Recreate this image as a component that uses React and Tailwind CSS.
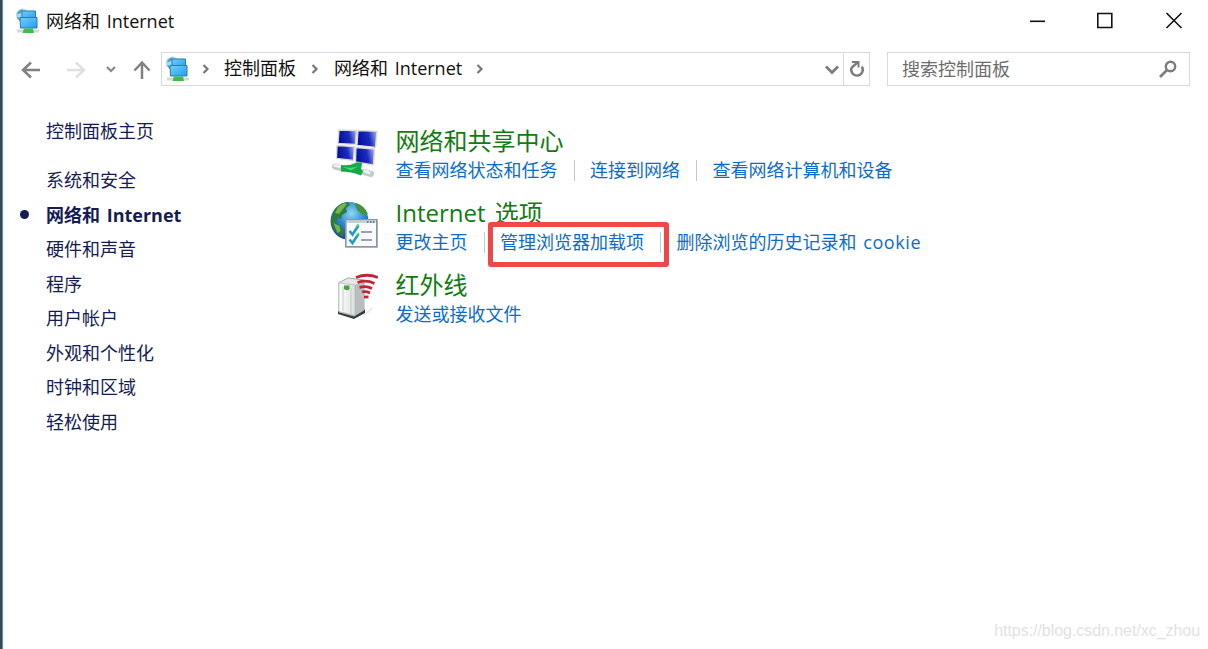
/**
 * App.jsx - 控制面板窗口 (网络和 Internet)
 */
import React from 'react';

const CATEGORIES = [
  '系统和安全',
  '网络和 Internet',
  '硬件和声音',
  '程序',
  '用户帐户',
  '外观和个性化',
  '时钟和区域',
  '轻松使用',
];

const ACTIVE = '网络和 Internet';

const SECTIONS = [
  {
    title: '网络和共享中心',
    Icon: SharingIcon,
    links: ['查看网络状态和任务', '连接到网络', '查看网络计算机和设备'],
  },
  {
    title: 'Internet 选项',
    Icon: InternetOptionsIcon,
    links: ['更改主页', '管理浏览器加载项', '删除浏览的历史记录和 cookie'],
    marked: '管理浏览器加载项',
  },
  {
    title: '红外线',
    Icon: InfraredIcon,
    links: ['发送或接收文件'],
  },
];

function NetworkIcon() {
  return (
    <svg width="25" height="26" viewBox="0 0 25 26" className="shrink-0">
      <defs>
        <linearGradient id="screen" x1="0" y1="0" x2="1" y2="1">
          <stop offset="0" stopColor="#72d0fc" />
          <stop offset="1" stopColor="#229eee" />
        </linearGradient>
      </defs>
      <circle cx="7.500" cy="7" r="6.500" fill="#a8d8ee" />
      <path d="M2 5q3-4 6-3.500l-2 3.500-3 1zM1.500 9l4 1v4z" fill="#4c9fc9" />
      <path d="M7 3h13.500v8h-13.500z" fill="url(#screen)" stroke="#267daf" />
      <path d="M5 9.500h17v10.500H5.500z" fill="url(#screen)" stroke="#267daf" />
      <path d="M2 21.500h22v3H2z" fill="#d7d9d9" />
      <path d="M9 20.500h9l1 4.500H7.500z" fill="#3fbd4a" />
    </svg>
  );
}

function SharingIcon() {
  return (
    <svg width="48" height="52" viewBox="0 0 48 52">
      <defs>
        <linearGradient id="monitor" x1="0" y1="0.2" x2="1" y2="0">
          <stop offset="0" stopColor="#0510a0" />
          <stop offset="0.550" stopColor="#1c2cc0" />
          <stop offset="1" stopColor="#a9bcf2" />
        </linearGradient>
      </defs>
      <g fill="url(#monitor)" stroke="#dedbd7" strokeWidth="1.300">
        <path d="M9 2l17.500.5-1 14-17.500-1z" />
        <path d="M28 2.500l19 .8-1.500 16-18.500-2z" />
        <path d="M7 17.500l17.500 1-1 14-17-2z" />
        <path d="M26 19.500l18.500 1.500-1 16-18-3z" />
      </g>
      <path d="M5 38.500l8 2M34 44l7 2" stroke="#c3cbc9" strokeWidth="6" strokeLinecap="round" />
      <path d="M5 37.500l5 1M35 43l4 1.500" stroke="#eef1f0" strokeWidth="3" strokeLinecap="round" />
      <path d="M11 37q9 1 16-2.500h5q0 3-1 6l2 3-2 4q-10-4-20-4z" fill="#14a948" />
      <path d="M13 39q9 1.500 15-.5l-7 4z" fill="#48db76" />
    </svg>
  );
}

function InternetOptionsIcon() {
  return (
    <svg width="48" height="52" viewBox="0 0 48 52">
      <defs>
        <radialGradient id="globe" cx="0.55" cy="0.3" r="0.7">
          <stop offset="0" stopColor="#8ed8f5" />
          <stop offset="0.5" stopColor="#2a87d4" />
          <stop offset="1" stopColor="#17459c" />
        </radialGradient>
      </defs>
      <circle cx="19.500" cy="21" r="19" fill="url(#globe)" />
      <path d="M6 8q5-6 12-6l2 3-4 3 1 4-5 3-1 4-3-1-2 5 5 3 3 6-1 5Q2 32 1 21 2 13 6 8z" fill="#2d7c3c" />
      <path d="M8 7l6-4 3 1-4 5-4 5-4-1zM3.500 23l6 3 1 5-3 2z" fill="#70b653" />
      <path d="M26 3q9 3 12 11l-5 1-5-4-3-5z" fill="#46923a" />
      <path d="M16.500 20.500h31.500v27.500h-31.500z" fill="#cfd2d5" />
      <path d="M15.800 19.800h31v27h-31z" fill="#fafbfd" stroke="#8e969d" strokeWidth="1.600" />
      <path d="M17 21h28.500v2H17z" fill="#c4cfda" />
      <path d="M37 22h1.500m1.500 0h1.500m1.500 0h1.500" stroke="#4d6278" strokeWidth="1.500" />
      <path d="M19.500 31l3 3.500 6-9M19.500 39.500l3 3.500 6-9" fill="none" stroke="#219cc2" strokeWidth="2.600" />
      <path d="M26 36l3-3M26 27l2.500-3" stroke="#54d466" strokeWidth="1.500" />
      <path d="M31 32h11M31 40h11" stroke="#817da0" strokeWidth="1.700" />
    </svg>
  );
}

function InfraredIcon() {
  return (
    <svg width="48" height="52" viewBox="0 0 48 52">
      <defs>
        <linearGradient id="tower" x1="0" y1="0" x2="1" y2="0">
          <stop offset="0" stopColor="#ffffff" />
          <stop offset="1" stopColor="#dcdfdf" />
        </linearGradient>
      </defs>
      <path d="M34 42l9-8-1 4-10 8z" fill="#eeeeee" />
      <path d="M8 39l16 4 11-6v4l-11 6L8 42z" fill="#363b3c" />
      <path d="M9 10.500l9-4.500 16 2v30l-10 6-15-4z" fill="#e6e8e8" stroke="#a6a9a9" />
      <path d="M25 13l9-5v30l-9 5.500z" fill="#b9bdbd" />
      <path d="M9 11l16 2v30.500l-16-4z" fill="url(#tower)" stroke="#b2b6b6" strokeWidth=".7" />
      <path d="M13 15v24M21 16v26" stroke="#b6bbbb" strokeWidth=".7" />
      <path d="M14 13.500h5.500v3.500q-2 2.500-5.500 0z" fill="#45a637" />
      <g fill="none" stroke="#c32534" strokeWidth="2.800">
        <path d="M26 5.500Q37 1 48 5.500" />
        <path d="M27.500 10.500q9-3 17 1" />
        <path d="M29.500 15.500q7-2 12.500 1" />
        <path d="M32 20q4-1 8 1" />
        <path d="M34 25h4.500" />
      </g>
    </svg>
  );
}

function Crumb() {
  return (
    <svg width="8" height="12" viewBox="0 0 8 12" className="shrink-0">
      <path d="M1.500 2l4 4-4 4" fill="none" stroke="#777777" strokeWidth="2.200" />
    </svg>
  );
}

function TitleBar() {
  return (
    <header className="flex h-[42px] items-center pl-3">
      <NetworkIcon />
      <h1 className="ml-[6px] text-[#111111]">网络和 Internet</h1>
      <svg width="154" height="18" viewBox="0 0 154 18" className="ml-auto mr-[25px]">
        <g fill="none" stroke="#111111" strokeWidth="1.600">
          <path d="M1 9.300h15" />
          <path d="M68.800 1.500h14v14h-14z" />
          <path d="M137.500 1l15 15m0-15l-15 15" />
        </g>
      </svg>
    </header>
  );
}

function NavBar() {
  return (
    <nav className="mt-[10px] flex h-[34px] items-center">
      <svg width="158" height="34" viewBox="0 0 158 34" className="shrink-0">
        <g fill="none" strokeWidth="2.500">
          <path d="M37 18H20m8-7.500L20 18l8 7.500" stroke="#808080" />
          <path d="M64 18h17m-8-7.500l8 7.500-8 7.500" stroke="#e0e0e0" />
          <path d="M104 15l4 4 4-4" stroke="#888888" strokeWidth="2.200" />
          <path d="M139 27V10.500m-7.500 8l7.500-8 7.500 8" stroke="#808080" />
        </g>
      </svg>
      <div className="flex h-full w-[709px] items-center border border-[#d9d9d9] pl-[3px]">
        <NetworkIcon />
        <div className="ml-[12px]">
          <Crumb />
        </div>
        <span className="ml-[14px] -translate-y-px text-[#111111]">控制面板</span>
        <div className="ml-[15px]">
          <Crumb />
        </div>
        <span className="ml-[15px] -translate-y-px text-[#111111]">网络和 Internet</span>
        <div className="ml-[14px]">
          <Crumb />
        </div>
        <svg width="16" height="12" viewBox="0 0 16 12" className="ml-auto mr-[3px]">
          <path d="M2 3.500l6 6 6-6" fill="none" stroke="#7c7c7c" strokeWidth="2.700" />
        </svg>
        <div className="flex h-full w-[26px] items-center justify-center border-l border-[#d9d9d9]">
          <svg width="18" height="20" viewBox="0 0 18 20">
            <path d="M13.800 7.500A5.800 5.800 0 1 1 3.700 8.500L9.500 3.500" fill="none" stroke="#7c7c7c" strokeWidth="2.400" />
            <path d="M4 3h6.500v5.500" fill="none" stroke="#7c7c7c" strokeWidth="2" />
          </svg>
        </div>
      </div>
      <div className="ml-[17px] flex h-full w-[303px] items-center border border-[#d9d9d9] pl-[14px] text-[#6d6d6d]">
        搜索控制面板
        <svg width="20" height="20" viewBox="0 0 20 20" className="ml-auto mr-[11px]">
          <circle cx="12.500" cy="7.500" r="4.700" fill="none" stroke="#7c7c7c" strokeWidth="2.400" />
          <path d="M9 11L2 18" stroke="#7c7c7c" strokeWidth="2.600" />
        </svg>
      </div>
    </nav>
  );
}

function Sidebar() {
  return (
    <aside className="w-[327px] shrink-0 pt-[27px] text-[#151c55]">
      <a className="flex h-[35px] items-center pl-[43px]">控制面板主页</a>
      <ul className="mt-[15px]">
        {CATEGORIES.map((name) => (
          <li key={name} className="flex h-[34.500px] items-center">
            <span className="flex w-[43px] pl-[17px]">
              {name === ACTIVE && <i className="size-[9px] rounded-full bg-[#151c55]" />}
            </span>
            <a className={name === ACTIVE ? 'font-bold' : ''}>{name}</a>
          </li>
        ))}
      </ul>
    </aside>
  );
}

function Section({ title, Icon, links, marked }) {
  return (
    <section className="flex h-[72px]">
      <div className="mt-[2px] shrink-0">
        <Icon />
      </div>
      <div className="ml-[17.500px]">
        <h2 className="h-[31px] text-[24px] leading-[30px] [word-spacing:3px] text-[#107c10]">{title}</h2>
        <div className="flex h-[26px] items-center">
          {links.map((link, i) => (
            <React.Fragment key={link}>
              {i > 0 && <span className="ml-[16px] mr-[15.500px] h-[21px] w-px bg-[#c8c8c8]" />}
              <span className="relative">
                <a className="text-[#0a6cd0]">
                  {link.replace('cookie', '')}
                  {link.endsWith('cookie') && <span className="tracking-[0.6px]">cookie</span>}
                </a>
                {/* 红色标注框 */}
                {link === marked && (
                  <span className="absolute -left-[12px] -top-[7px] h-[45px] w-[181px] rounded-[3px] border-[5px] border-[#ef4848]" />
                )}
              </span>
            </React.Fragment>
          ))}
        </div>
      </div>
    </section>
  );
}

export default function App() {
  return (
    <div className="relative flex h-[649px] w-[1208px] overflow-hidden bg-white font-['Open_Sans','Noto_Sans_CJK_SC',sans-serif] text-[18px] leading-[26px] [word-spacing:2px] whitespace-nowrap">
      <div className="w-[3px] shrink-0 border-r border-[#3a9be6] bg-[#3c4650]" />
      <div className="flex-1">
        <TitleBar />
        <NavBar />
        <div className="flex">
          <Sidebar />
          <main className="pt-[40px]">
            {SECTIONS.map((section) => (
              <Section key={section.title} {...section} />
            ))}
          </main>
        </div>
      </div>
      <p className="absolute bottom-[5px] right-[8px] font-['Liberation_Sans',sans-serif] text-[16px] tracking-[-0.050px] text-[#e2e2e2]">
        https://blog.csdn.net/xc_zhou
      </p>
    </div>
  );
}
